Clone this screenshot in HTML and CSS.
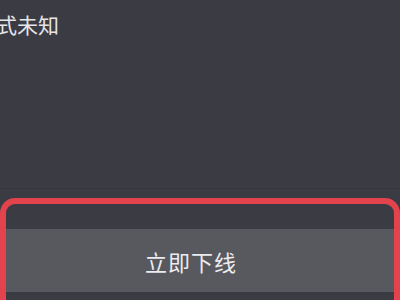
FILE: index.html
```html
<!DOCTYPE html>
<html lang="zh">
<head>
  <meta charset="UTF-8">
  <meta name="viewport" content="width=device-width, initial-scale=1.0">
  <link rel="stylesheet" href="styles.css">
  <title>下线</title>
</head>
<body>
<div class="page">
  <p class="info">式未知</p>
  <div class="sep"></div>
  <div class="mark">
    <button class="offline">立即下线</button>
  </div>
</div>
</body>
</html>
```
FILE: styles.css
```css
html, body{
  margin:0;
  padding:0;
  background-color:#3b3b44;
}
.page{
  width:400px;
  height:300px;
  overflow:hidden;
  display:flex;
  flex-direction:column;
  font-family:"Noto Sans CJK SC", "Noto Sans", sans-serif;
}
.info{
  margin:0 0 0 -4px;
  padding-top:10px;
  font-size:21px;
  line-height:28px;
  color:#e6e6ea;
  white-space:nowrap;
}
.sep{
  margin-top:150px;
  height:1px;
  background-color:#363640;
}
.mark{
  margin-top:9px;
  border:6px solid #e2434c;
  border-bottom:none;
  border-radius:15px 15px 0 0;
  padding-top:25px;
  flex:1;
  display:flex;
  flex-direction:column;
}
.offline{
  height:63px;
  border:none;
  border-bottom:3px solid #3a3a42;
  background-color:#58585f;
  color:#ececef;
  font-family:"Noto Sans CJK SC", "Noto Sans", sans-serif;
  font-size:22px;
  letter-spacing:1px;
  padding:0 18px 0 0;
  box-sizing:content-box;
}
```
